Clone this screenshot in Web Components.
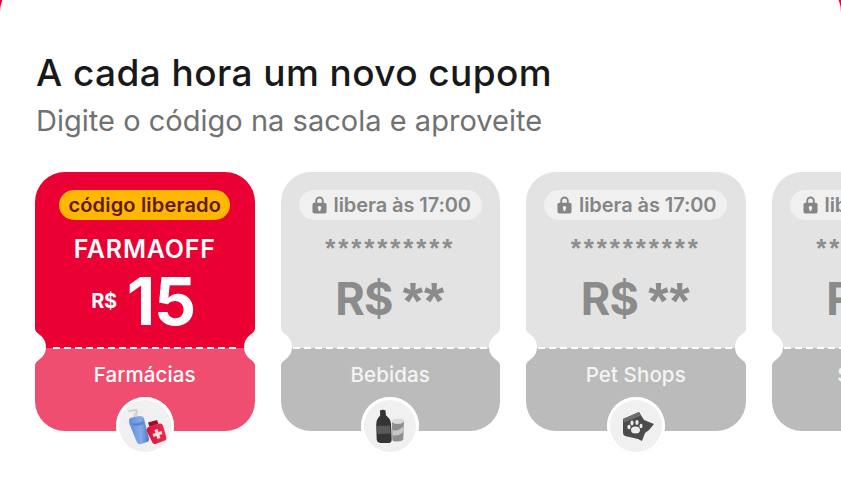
<!doctype html>
<html lang="pt-BR"><head><meta charset="utf-8"><title>Cupons</title>
<style>
html,body{margin:0;padding:0;height:500px;overflow:hidden;background:#ea0033}
body{font-family:Inter,"Noto Sans",sans-serif}
coupon-row svg{display:block}
</style></head><body>
<coupon-sheet>
  <span slot="title">A cada hora um novo cupom</span>
  <span slot="subtitle">Digite o código na sacola e aproveite</span>
  <coupon-row>
    <coupon-card state="open" code="FARMAOFF" value="15" label="Farmácias">
      <svg slot="icon" viewBox="0 0 58 58" width="58" height="58"><defs>
        <filter id="s"><feGaussianBlur stdDeviation=".35"/></filter>
        <linearGradient id="b" x1="0" x2="1"><stop offset="0" stop-color="#5c8fe0"/><stop offset=".6" stop-color="#86a9e8"/><stop offset="1" stop-color="#4f74c4"/></linearGradient>
        <linearGradient id="r" x1="0" x2="1"><stop offset="0" stop-color="#d8163c"/><stop offset="1" stop-color="#f02a4c"/></linearGradient></defs>
        <g filter="url(#s)" transform="translate(0 3)"><path d="M12 10.500 20 9l1.500 1v3.500h-2V11l-7 1z" fill="#c9ccd2"/><rect x="17.600" y="13" width="4" height="5" fill="#d4d6da"/>
        <path d="M13 20.500q0-2.500 3-3l8-1.500q3-.3 4 2.500l5 20q.5 2.500-2 3.500l-6 2q-3 .8-4-1.500L13.500 24z" fill="url(#b)"/>
        <path d="M13.200 23q6 2 14-2l.8 3q-8 4-14-1z" fill="#3f68b8" opacity=".5"/>
        <path d="M32 22.500 41 20l1.500 4-9 3z" fill="#a50f2c"/>
        <path d="M31 27.500 43 23.800q3-.8 4 2l3.200 11q.8 3-2 4l-8 3q-3 1-4.200-2l-5-10q-1-3 1-4.300z" fill="url(#r)"/>
        <path d="M38.500 30l3-1 1 3 3-1 1 3-3 1 1 3-3 1-1-3-3 1-1-3 3-1z" fill="#f6dfe2"/></g>
      </svg>
    </coupon-card>
    <coupon-card state="locked" label="Bebidas">
      <svg slot="icon" viewBox="0 0 58 58" width="58" height="58"><defs><filter id="s2"><feGaussianBlur stdDeviation=".4"/></filter></defs>
        <g filter="url(#s2)" transform="translate(0 4)">
        <path d="M19 9.500q3-1.500 5.500 0l.5 5q4.500 3 5 8l.7 16q0 3-2.500 3.500h-9q-3-.3-3.500-3l-.5-15q0-6 4-9.500z" fill="#343434"/>
        <path d="M16 25l13-.5.5 8-13 .5z" fill="#5a5a5a"/>
        <path d="M31 21q5-3 11-2l1 1-.7 18q-.5 2-6 2.500-5 .3-5-2z" fill="#8e8e8e"/>
        <ellipse cx="36.800" cy="20.200" rx="6" ry="2.800" fill="#d9d9d9"/>
        <path d="M31.500 29q5 2 11-4v6q-6 5-11 3z" fill="#c6c6c6"/></g>
      </svg>
    </coupon-card>
    <coupon-card state="locked" label="Pet Shops">
      <svg slot="icon" viewBox="0 0 58 58" width="58" height="58"><defs><filter id="s3"><feGaussianBlur stdDeviation=".4"/></filter></defs>
        <g filter="url(#s3)">
        <path d="M16 22 32 15l5 8 10 4-5 6-4 3-3 8-4-2-13-3q-2-1-2-3z" fill="#4c4c4c"/>
        <path d="M16 22 32 15l2 3.500-17 7z" fill="#6e6e6e"/>
        <g fill="#ececec"><ellipse cx="28.500" cy="33" rx="4.500" ry="3.500"/><ellipse cx="22" cy="30" rx="1.600" ry="2.200"/><ellipse cx="25" cy="26" rx="1.600" ry="2.400"/><ellipse cx="30" cy="25.500" rx="1.600" ry="2.400"/><ellipse cx="34" cy="29" rx="1.500" ry="2.200"/></g></g>
      </svg>
    </coupon-card>
    <coupon-card state="locked" label="Sorvetes"></coupon-card>
  </coupon-row>
</coupon-sheet>
<script>
const def=(name,html,extra={})=>{
  const t=document.createElement('template');t.innerHTML=html;
  customElements.define(name,class extends HTMLElement{
    constructor(){super();this.attachShadow({mode:'open'}).appendChild(t.content.cloneNode(true));}
    connectedCallback(){extra.init&&extra.init(this)}
  });
};
def('coupon-sheet',`<style>
:host{display:flex;flex-direction:column;height:500px;margin-top:-20px;padding-top:20px;box-sizing:content-box;background:#fff;border-radius:32px 32px 0 0;overflow:hidden}
h2{margin:0;padding:52px 0 0 36px;font:500 37px/42px Inter,sans-serif;letter-spacing:.42px;color:#191919}
p{margin:0;padding:9px 0 0 36px;font:400 29px/36px Inter,sans-serif;letter-spacing:.02px;color:#717171}
.row{padding-top:33px}
</style><h2><slot name="title"></slot></h2><p><slot name="subtitle"></slot></p><div class="row"><slot></slot></div>`);
def('coupon-row',`<style>:host{display:flex;gap:26px;padding-left:35px;width:1100px}</style><slot></slot>`);
def('coupon-lock',`<style>:host{display:inline-flex}</style><svg viewBox="0 0 16 19" width="15" height="18"><path fill="currentColor" fill-rule="evenodd" d="M3.500 7V5a4.500 4.500 0 0 1 9 0v2h1q2 0 2 2v7.500q0 2-2 2h-11q-2 0-2-2V9q0-2 2-2zm2 0h5V5a2.500 2.500 0 0 0-5 0zM8 10.500a2 2 0 0 0-1 3.700V16h2v-1.800a2 2 0 0 0-1-3.700z"/></svg>`);
def('coupon-card',`<style>
:host{display:block;position:relative;flex:0 0 219.500px;width:219.500px;height:259px;--top:#e3e3e3;--stub:#bbb;--ink:#8b8b8b;--pill:#f0f0f0;--pillink:#858585;--dash:12px}
:host([state=open]){--top:#ea0033;--stub:#f04e70;--ink:#fff;--pill:#ffb700;--pillink:#5e1a05;--dash:18px}
.top{height:176px;background:var(--top);border-radius:30px 30px 0 0;display:flex;flex-direction:column;align-items:center;box-sizing:border-box;padding-top:18px}
.stub{height:83px;background:var(--stub);border-radius:0 0 30px 30px;display:flex;justify-content:center;box-sizing:border-box;padding-top:13px;font:500 20.500px/28px Inter,sans-serif;letter-spacing:.1px;color:#fff}
:host([state=locked]) .stub{color:#f4f4f4}
.pill{height:30px;box-sizing:border-box;padding:0 9px;border-radius:15px;background:var(--pill);color:var(--pillink);display:flex;align-items:center;gap:7px;font:600 20px/30px Inter,sans-serif;letter-spacing:.18px;white-space:nowrap}
:host([state=locked]) .pill{padding:0 11px 0 13px;letter-spacing:-.08px}
.code{margin-top:14px;font:600 25px/30px Inter,sans-serif;letter-spacing:.8px;color:var(--ink);white-space:nowrap}
.stars{margin-top:11px;height:32px;font:700 26px/34px "Liberation Sans",sans-serif;letter-spacing:2.900px;color:#8d8d8d;white-space:nowrap}
.amount{display:flex;align-items:center;justify-content:center;gap:10px;height:62px;margin-top:6px;color:var(--ink);white-space:nowrap}
.cur{font:700 20px/24px Inter,sans-serif;letter-spacing:-.4px}
.val{font:700 66px/62px Inter,sans-serif;letter-spacing:-1px;margin-right:3px}
.lock-cur{font:700 45px/50px Inter,sans-serif;letter-spacing:-.8px}
.lock-val{font:700 52px/50px "Liberation Sans",sans-serif;letter-spacing:1px;margin-top:4px}
:host([state=locked]) .amount{margin-top:5px;gap:10px}
.dash{position:absolute;left:var(--dash);right:var(--dash);top:175px;height:2px;background:repeating-linear-gradient(90deg,#fff 0 7px,transparent 7px 11px)}
.bite{position:absolute;top:157px;width:11px;height:36px;fill:#fff}
.l{left:0}.r{right:0;transform:scaleX(-1)}
.badge{position:absolute;left:50%;top:225px;width:58px;height:58px;margin-left:-29px;border-radius:50%;background:#f0f0f0;box-shadow:inset 0 0 0 3px #fff;overflow:hidden}
</style>
<div class="top" part="top"></div><div class="stub"></div><div class="dash"></div>
<svg class="bite l" viewBox="0 0 11 36"><path d="M0 0C.5 3 3 4.500 5 6 9 9 11 13 11 18 11 23 9 27 5 30 3 31.500.5 33 0 36z"/></svg>
<svg class="bite r" viewBox="0 0 11 36"><path d="M0 0C.5 3 3 4.500 5 6 9 9 11 13 11 18 11 23 9 27 5 30 3 31.500.5 33 0 36z"/></svg>
<div class="badge"><slot name="icon"></slot></div>`,{init(el){
  const s=el.shadowRoot,top=s.querySelector('.top');
  s.querySelector('.stub').textContent=el.getAttribute('label');
  if(el.getAttribute('state')==='open'){
    top.innerHTML='<div class="pill">código liberado</div><div class="code"></div><div class="amount"><span class="cur">R$</span><span class="val"></span></div>';
    top.querySelector('.code').textContent=el.getAttribute('code');
    top.querySelector('.val').textContent=el.getAttribute('value');
  }else{
    top.innerHTML='<div class="pill"><coupon-lock></coupon-lock><span>libera às 17:00</span></div><div class="stars">**********</div><div class="amount"><span class="lock-cur">R$</span><span class="lock-val">**</span></div>';
  }
}});
</script>
</body></html>
